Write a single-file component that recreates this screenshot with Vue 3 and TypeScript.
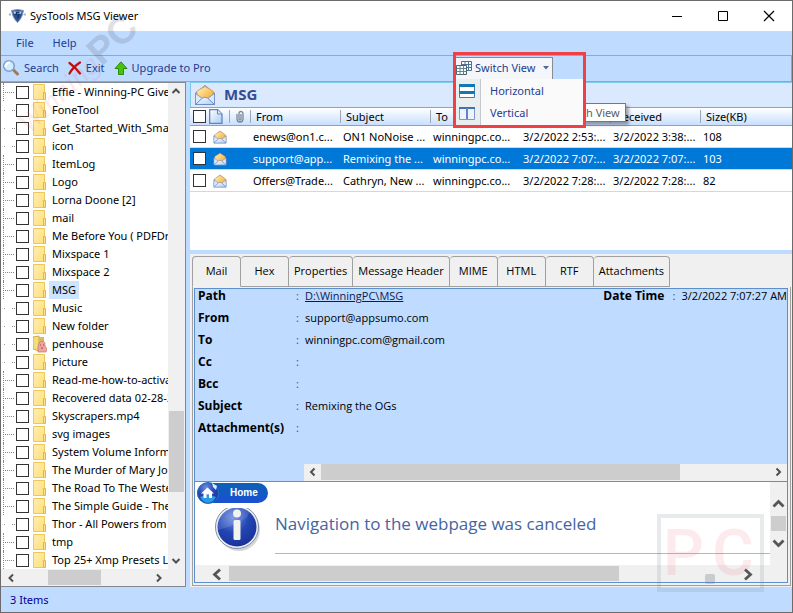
<script setup lang="ts">
import { ref } from 'vue'

interface Folder { name: string; partial?: boolean; special?: boolean }
interface Mail { from: string; subject: string; to: string; sent: string; received: string; size: number }

const folders: Folder[] = [
  { name: 'Effie - Winning-PC Giveaway' },
  { name: 'FoneTool', partial: true },
  { name: 'Get_Started_With_Smallpdf', partial: true },
  { name: 'icon', partial: true },
  { name: 'ItemLog' },
  { name: 'Logo' },
  { name: 'Lorna Doone [2]' },
  { name: 'mail' },
  { name: 'Me Before You ( PDFDrive )' },
  { name: 'Mixspace 1' },
  { name: 'Mixspace 2' },
  { name: 'MSG' },
  { name: 'Music', partial: true },
  { name: 'New folder', partial: true },
  { name: 'penhouse', partial: true, special: true },
  { name: 'Picture', partial: true },
  { name: 'Read-me-how-to-activate' },
  { name: 'Recovered data 02-28-2022' },
  { name: 'Skyscrapers.mp4' },
  { name: 'svg images' },
  { name: 'System Volume Information' },
  { name: 'The Murder of Mary Jones' },
  { name: 'The Road To The Western' },
  { name: 'The Simple Guide - The' },
  { name: 'Thor - All Powers from', partial: true },
  { name: 'tmp' },
  { name: 'Top 25+ Xmp Presets Lightroom' },
]

const mails: Mail[] = [
  { from: 'enews@on1.c...', subject: 'ON1 NoNoise ...', to: 'winningpc.co...', sent: '3/2/2022 2:53:...', received: '3/2/2022 3:38:...', size: 108 },
  { from: 'support@app...', subject: 'Remixing the ...', to: 'winningpc.co...', sent: '3/2/2022 7:07:...', received: '3/2/2022 7:07:...', size: 103 },
  { from: 'Offers@Trade...', subject: 'Cathryn, New ...', to: 'winningpc.co...', sent: '3/2/2022 7:28:...', received: '3/2/2022 7:28:...', size: 82 },
]

const tabs = ['Mail', 'Hex', 'Properties', 'Message Header', 'MIME', 'HTML', 'RTF', 'Attachments']
const details = [
  { label: 'From', value: 'support@appsumo.com' },
  { label: 'To', value: 'winningpc.com@gmail.com' },
  { label: 'Cc', value: '' },
  { label: 'Bcc', value: '' },
  { label: 'Subject', value: 'Remixing the OGs' },
  { label: 'Attachment(s)', value: '' },
]
const activeFolder = ref('MSG')
const activeMail = ref(1)
const activeTab = ref('Mail')
</script>

<template>
  <div class="window">
    <svg class="defs" width="0" height="0" aria-hidden="true">
      <defs>
        <linearGradient id="flap" x1="0" y1="0" x2="1" y2="1"><stop offset="0" stop-color="#fff3c4" /><stop offset="1" stop-color="#f4a41c" /></linearGradient>
        <linearGradient id="paper" x1="0" y1="0" x2="1" y2="1"><stop offset="0" stop-color="#ffffff" /><stop offset="1" stop-color="#a9cdf2" /></linearGradient>
        <linearGradient id="fold" x1="0" y1="0" x2="1" y2="1"><stop offset="0" stop-color="#ffeeb0" /><stop offset="1" stop-color="#ffdf7c" /></linearGradient>
        <radialGradient id="orb" cx=".4" cy=".25" r=".8"><stop offset="0" stop-color="#6f8fe0" /><stop offset=".5" stop-color="#2346b4" /><stop offset="1" stop-color="#1a2f96" /></radialGradient>
        <symbol id="envelope" viewBox="0 0 22 22">
          <path d="M1.5 9 11 1.5 20.5 9V20.5H1.5z" fill="#9aaad2" stroke="#7d8fbe" />
          <path d="M3 7 11 2.500l8 4.500v6l-8 4-8-4z" fill="url(#flap)" stroke="#d99a35" stroke-width=".7" />
          <path d="M1.500 9.500 8.500 14.500 1.500 20.500zM20.500 9.500 13.500 14.500 20.500 20.500z" fill="#d8eafc" stroke="#6683bd" stroke-width=".7" />
          <path d="M1.500 20.500 8.500 14Q11 12.500 13.500 14L20.500 20.500z" fill="url(#paper)" stroke="#6683bd" stroke-width=".8" />
        </symbol>
        <symbol id="chev-left" viewBox="0 0 16 16"><path d="M10 4.500 6.500 8 10 11.500" fill="none" stroke="#505050" stroke-width="2" /></symbol>
        <symbol id="chev-right" viewBox="0 0 16 16"><path d="M6 4.500 9.500 8 6 11.500" fill="none" stroke="#505050" stroke-width="2" /></symbol>
        <symbol id="chev-up" viewBox="0 0 16 16"><path d="M4.500 10 8 6.500 11.500 10" fill="none" stroke="#505050" stroke-width="2" /></symbol>
        <symbol id="chev-down" viewBox="0 0 16 16"><path d="M4.500 6 8 9.500 11.500 6" fill="none" stroke="#505050" stroke-width="2" /></symbol>
      </defs>
    </svg>

    <header class="titlebar">
      <svg class="app-icon" width="17" height="14" viewBox="0 0 17 14">
        <path d="M2.500 1.500 8.500.500 14.500 1.500 13 7Q12 10 8.500 13.500 5 10 4 7z" fill="#2c5093" stroke="#8297b8" />
        <path d="M4 2.500h9L11.500 5H5.500z" fill="#c3d1e6" />
        <path d="M10.500 3.500H7.500L7 5.500h3L9.500 8 8 9" fill="none" stroke="#16356e" stroke-width="1.300" />
        <path d="M1 4v3M0 5.500h2M16 4v3M14.500 5.500h2" stroke="#8fa3bf" stroke-width=".8" />
      </svg>
      <span>SysTools MSG Viewer</span>
      <div class="caption-buttons">
        <button aria-label="Minimize"><svg width="12" height="12"><path d="M1 6.500h10" stroke="#000" /></svg></button>
        <button aria-label="Maximize"><svg width="12" height="12"><path d="M1.500 1.500h9v9h-9z" fill="none" stroke="#000" /></svg></button>
        <button aria-label="Close"><svg width="12" height="12"><path d="M1 1l10 10M11 1 1 11" stroke="#000" stroke-width="1.200" /></svg></button>
      </div>
    </header>

    <nav class="menubar">
      <button>File</button>
      <button>Help</button>
    </nav>

    <div class="toolbar">
      <button class="tool">
        <svg width="18" height="18" viewBox="0 0 18 18">
          <path d="M11.500 11 15.500 15" stroke="#a8784a" stroke-width="3" stroke-linecap="round" />
          <circle cx="7" cy="7" r="5.300" fill="#d3eaff" stroke="#7f9fcb" stroke-width="1.600" />
          <path d="M3.500 8Q3.500 3.500 8 3.500" fill="none" stroke="#fff" stroke-width="2" />
        </svg>
        <span>Search</span>
      </button>
      <button class="tool">
        <svg width="14" height="14" viewBox="0 0 14 14"><path d="M1.500 2Q7 6 12 12.500M12 1.500Q5 6 1.500 12.500" fill="none" stroke="#c40d0d" stroke-width="2.200" stroke-linecap="round" /></svg>
        <span>Exit</span>
      </button>
      <button class="tool">
        <svg width="14" height="14" viewBox="0 0 14 14"><path d="M7 .800 13 7.500H9.500v6h-5v-6H1z" fill="#46c40c" stroke="#2d8c06" /></svg>
        <span>Upgrade to Pro</span>
      </button>
      <div class="switcher">
        <button class="switch-button">
          <svg width="16" height="14" viewBox="0 0 16 14">
            <path d="M5.500.500h10v9h-10z" fill="#fff" stroke="#4a7594" /><path d="M5.500 3.500h10M5.500 6.500h10M9 .500v9M12.500.500v9" stroke="#4a7594" />
            <path d="M.500 4.500h10v9H.500z" fill="#fff" stroke="#48636b" /><path d="M.500 7.500h10M.500 10.500h10M4 4.500v9M7.500 4.500v9" stroke="#5d888e" />
          </svg>
          <span>Switch View</span>
          <svg width="6" height="4" viewBox="0 0 6 4"><path d="M0 0h6L3 3.500z" fill="#4b65a8" /></svg>
        </button>
        <div class="dropdown">
          <button>
            <svg width="16" height="16" viewBox="0 0 16 16"><path d="M.500 1.500h15v13H.500z" fill="#fff" stroke="#3f7fae" /><path d="M0 1h16v3H0zM0 8h16v3H0z" fill="#1677b8" /></svg>
            <span>Horizontal</span>
          </button>
          <button>
            <svg width="16" height="16" viewBox="0 0 16 16"><path d="M.500 2.500h15v12H.500z" fill="#eef4fd" stroke="#7d97cb" /><path d="M0 2h16v2H0z" fill="#4070b8" /><path d="M8 3v11" stroke="#6484c0" stroke-width="2" /></svg>
            <span>Vertical</span>
          </button>
        </div>
        <div class="tip">h View</div>
        <div class="highlight"></div>
      </div>
    </div>

    <main class="body">
      <aside class="tree">
        <div class="tree-main">
          <ul>
            <li v-for="folder in folders" :key="folder.name" :class="{ selected: folder.name === activeFolder, partial: folder.partial }">
              <span class="branch"></span>
              <input type="checkbox" :aria-label="folder.name">
              <svg v-if="!folder.special" class="folder" width="14" height="18" viewBox="0 0 14 18">
                <path d="M.500 1.500h11v15H.500z" fill="url(#fold)" stroke="#edc75a" /><path d="M10.500 9.500h2v7h-2z" fill="#ffe48c" stroke="#e4b63f" />
              </svg>
              <svg v-else class="folder" width="14" height="18" viewBox="0 0 14 18">
                <path d="M0 2 6 1v15L0 14z" fill="#f4dc79" stroke="#c9ad4c" /><path d="M6 2h5v13H6z" fill="#d7bd5e" /><path d="M6 8Q9 4 12 8v3l2 3-1 3H5V12z" fill="#f0a49e" stroke="#bd7771" stroke-width=".700" /><path d="M7 10h1M10 10h1M8 13h2" stroke="#884f4e" />
              </svg>
              <button @click="activeFolder = folder.name">{{ folder.name }}</button>
            </li>
          </ul>
          <div class="vbar">
            <svg width="16" height="16"><use href="#chev-up" /></svg>
            <div class="track-v"><div class="thumb-v"></div></div>
            <svg width="16" height="16"><use href="#chev-down" /></svg>
          </div>
        </div>
        <div class="hbar tree-bar">
          <svg width="16" height="16"><use href="#chev-left" /></svg>
          <div class="track"><div class="thumb"></div></div>
          <svg width="16" height="16"><use href="#chev-right" /></svg>
        </div>
      </aside>

      <section class="content">
        <h1 class="folder-title"><svg width="22" height="22"><use href="#envelope" /></svg><span>MSG</span></h1>
        <div class="list">
          <table>
            <colgroup><col class="c-check"><col class="c-icon"><col class="c-icon"><col class="c-text"><col class="c-text"><col class="c-text"><col class="c-text"><col class="c-text"><col></colgroup>
            <thead>
              <tr>
                <th><input type="checkbox" aria-label="Select all"></th>
                <th><svg width="14" height="15" viewBox="0 0 14 15"><path d="M.700.700h8L13 5v9.300H.700z" fill="url(#paper)" stroke="#6a82bc" stroke-width="1.300" /><path d="M8.500.700V5H13" fill="#dce9fb" stroke="#6a82bc" /></svg></th>
                <th class="sep clip"><svg width="12" height="14" viewBox="0 0 12 14"><path d="M3 4v5a3 3 0 0 0 6 0V3.500a2 2 0 0 0-4 0V9a1 1 0 0 0 2 0V4" fill="none" stroke="#7d8794" stroke-width="1.300" /></svg></th>
                <th class="sep">From</th>
                <th class="sep">Subject</th>
                <th class="sep">To</th>
                <th class="sep" aria-label="Sent"></th>
                <th class="sep">Received</th>
                <th class="sep">Size(KB)</th>
              </tr>
            </thead>
            <tbody>
              <tr v-for="(mail, i) in mails" :key="mail.from" :class="{ active: i === activeMail }" @click="activeMail = i">
                <td><input type="checkbox" :aria-label="mail.from"></td>
                <td><svg width="14" height="14"><use href="#envelope" /></svg></td>
                <td></td>
                <td>{{ mail.from }}</td>
                <td>{{ mail.subject }}</td>
                <td>{{ mail.to }}</td>
                <td>{{ mail.sent }}</td>
                <td>{{ mail.received }}</td>
                <td>{{ mail.size }}</td>
              </tr>
            </tbody>
          </table>
        </div>

        <div class="preview">
          <div class="tabs" role="tablist">
            <button v-for="tab in tabs" :key="tab" role="tab" :aria-selected="tab === activeTab" :class="{ on: tab === activeTab }" @click="activeTab = tab">{{ tab }}</button>
          </div>
          <div class="pane">
            <div class="sheet">
              <dl class="details">
                <div class="line">
                  <dt>Path</dt><i>:</i><dd><a href="#path">D:\WinningPC\MSG</a></dd>
                  <div class="date"><b>Date Time</b><i>:</i><span>3/2/2022 7:07:27 AM</span></div>
                </div>
                <div v-for="row in details" :key="row.label" class="line"><dt>{{ row.label }}</dt><i>:</i><dd>{{ row.value }}</dd></div>
              </dl>
              <div class="hbar head-bar">
                <svg width="17" height="16"><use href="#chev-left" /></svg>
                <div class="track"><div class="thumb"></div></div>
                <svg width="17" height="16"><use href="#chev-right" /></svg>
              </div>
              <div class="browser">
                <div class="page">
                  <button class="home">
                    <svg width="22" height="22" viewBox="0 0 22 22"><circle cx="11" cy="11" r="10.500" fill="url(#orb)" stroke="#2b70b4" /><path d="M3 15Q11 11 19 15 17 20 11 21 5 20 3 15z" fill="#289be8" /><path d="M4 11.500 10.500 5.500 17 11.500H15V16H12V12.500H9.500V16H6.500V11.500z" fill="#fff" /><path d="M15 1 20 4 19 8 16 5z" fill="#d8eafb" /></svg>
                    <span>Home</span>
                  </button>
                  <div class="notice">
                    <svg class="info" width="47" height="44" viewBox="0 0 47 44">
                      <ellipse cx="25" cy="22" rx="21" ry="21" fill="#999" opacity=".4" />
                      <circle cx="23" cy="19" r="21.500" fill="#eceff5" stroke="#818ba5" />
                      <circle cx="23" cy="19" r="19.500" fill="url(#orb)" />
                      <path d="M4 17Q5 2 19 0H34Q37 4 33 9 24 17 4 22z" fill="#fff" opacity=".13" />
                      <circle cx="23" cy="5.500" r="4" fill="#f2f2ef" /><rect x="19.500" y="12" width="7" height="20" rx="1.500" fill="#f2f2ef" />
                    </svg>
                    <h2>Navigation to the webpage was canceled</h2>
                  </div>
                </div>
                <div class="vbar page-vbar">
                  <svg width="17" height="17" viewBox="0 0 17 17"><path d="M3.500 11.500 8.500 6.500 13.500 11.500" fill="none" stroke="#555" stroke-width="2.800" /></svg>
                  <div class="thumb-v"></div>
                  <svg width="17" height="17" viewBox="0 0 17 17"><path d="M3.500 5.500 8.500 10.500 13.500 5.500" fill="none" stroke="#555" stroke-width="2.800" /></svg>
                </div>
              </div>
              <div class="hbar page-bar">
                <svg width="34" height="17" viewBox="0 0 34 17"><path d="M25 3.500 19.500 8.500 25 13.500" fill="none" stroke="#555" stroke-width="2.800" /></svg>
                <div class="track"><div class="thumb"></div></div>
                <svg width="51" height="17" viewBox="0 0 51 17"><path d="M9 3.500 14.500 8.500 9 13.500" fill="none" stroke="#555" stroke-width="2.800" /></svg>
              </div>
            </div>
          </div>
        </div>
      </section>
    </main>

    <footer class="status">3 Items</footer>

    <div class="mark"><span>Winning</span><b>PC</b></div>
    <svg class="stamp" width="107" height="78" viewBox="0 0 107 78">
      <rect x="2" y="2" width="103" height="74" fill="none" stroke="#70808a" stroke-width="4" opacity=".16" />
      <g class="stamp-text"><text x="6" y="61">P</text><text x="55" y="61">C</text></g>
      <rect x="48" y="60" width="10" height="10" rx="2" fill="#6f7b85" opacity=".3" />
    </svg>
  </div>
</template>

<style>
body { margin: 0; }
</style>

<style scoped>
* { box-sizing: border-box; }
.window { position: relative; display: flex; flex-direction: column; height: 100vh; overflow: hidden; border: 1px solid #6b6b6b; background: #bfdbff; color: #000; font: 11px/18px "Noto Sans", "Open Sans", sans-serif; }
.defs { position: absolute; }
button { display: flex; align-items: center; margin: 0; padding: 0; border: 0; background: none; color: inherit; font: inherit; white-space: nowrap; }
svg { display: block; flex: none; }
input[type="checkbox"] { display: block; flex: none; appearance: none; width: 13px; height: 13px; margin: 0; border: 1px solid #333; background: #fff; }
.titlebar { display: flex; flex: none; align-items: center; height: 30px; padding-left: 8px; gap: 4px; background: #fff; }
.caption-buttons { display: flex; margin-left: auto; }
.caption-buttons button { justify-content: center; width: 46px; height: 30px; }
.menubar { display: flex; flex: none; height: 24px; padding-left: 15px; gap: 19px; color: #1e3c91; }
.toolbar { display: flex; flex: none; align-items: center; height: 27px; padding: 0 0 2px 1px; border: 1px solid #9aa5b5; border-left: 0; color: #1e3c91; }
.tool { gap: 4px; margin-right: 9px; }
.switcher { position: relative; margin: 0 238px 0 auto; }
.switch-button { width: 97px; height: 22px; gap: 3px; border: 1px solid #868b94; border-width: 1px 1px 0 0; background: #f4f6fa; }
.switch-button svg:last-child { margin-left: 4px; }
.dropdown { position: absolute; z-index: 2; top: 22px; left: 0; width: 127px; height: 46px; padding-top: 1px; background: linear-gradient(90deg, #e9eeee 24px, #c5c9ce 24px, #c5c9ce 25px, #fafafa 25px); }
.dropdown button { width: 100%; height: 22px; padding-left: 3px; gap: 15px; }
.highlight { position: absolute; z-index: 3; top: -5px; left: -3px; width: 133px; height: 76px; border: 3px solid #f04046; }
.tip { position: absolute; z-index: 1; top: 46px; left: 125px; width: 45px; height: 19px; padding-left: 4px; border: 1px solid #777; background: #fff; color: #5d5d5d; box-shadow: 3px 3px 3px #0005; line-height: 17px; }
.body { display: flex; flex: 1; min-height: 0; gap: 4px; }
.tree { display: flex; flex: none; flex-direction: column; width: 185px; border: 1px solid #828790; border-left: 0; background: #fff; }
.tree-main { display: flex; flex: 1; min-height: 0; }
.tree ul { flex: 1; min-width: 0; margin: 0; padding: 0 0 0 2px; list-style: none; overflow: hidden; }
.tree li { display: flex; align-items: center; height: 18px; }
.branch { flex: none; align-self: stretch; width: 13px; border-left: 1px dotted #888; background: repeating-linear-gradient(90deg, #888 0 1px, transparent 1px 2px) 1px 9px / 10px 1px no-repeat; }
.partial .branch { border-left-color: transparent; background: linear-gradient(90deg, #999 1px, transparent 1px 8px, #888 8px 9px, transparent 9px 10px, #888 10px) 0 9px / 11px 1px no-repeat; }
.folder { margin: 0 2px 0 4px; }
.tree li button { height: 18px; padding: 0 3px; }
.selected button { background: #cce4ff; }
.vbar { display: flex; flex: none; flex-direction: column; width: 17px; background: #f0f0f0; }
.track-v { display: flex; flex: 1; flex-direction: column; justify-content: flex-end; padding-bottom: 61px; }
.thumb-v { height: 81px; margin: 0 1px; background: #cdcdcd; }
.hbar { display: flex; flex: none; align-items: stretch; background: #f0f0f0; }
.track { flex: 1; }
.thumb { height: 100%; background: #cdcdcd; }
.tree-bar { height: 17px; padding: 1px 18px 1px 2px; }
.tree-bar .thumb { width: 53px; margin-left: 29px; }
.content { display: flex; flex: 1; flex-direction: column; min-width: 0; }
.folder-title { display: flex; flex: none; align-items: center; height: 25px; margin: 0; padding-left: 3px; gap: 8px; border: 1px solid #80c9ee; border-width: 1px 0 0 1px; background: #dbe9ff; color: #354d91; font: bold 15px/20px "Open Sans", sans-serif; }
.folder-title span { height: 22px; }
.list { flex: none; height: 143px; overflow: hidden; background: #fff; }
table { width: 100%; table-layout: fixed; border-collapse: separate; border-spacing: 0; }
.c-check { width: 18px; }
.c-icon { width: 21px; }
.c-text { width: 90px; }
th { height: 19px; padding: 0 0 0 6px; border: 1px solid #9a9fa8; border-width: 1px 0; background: linear-gradient(#fff, #c8dfff); font-weight: 400; line-height: 17px; text-align: left; overflow: hidden; white-space: nowrap; }
.sep { background: linear-gradient(#a0a7b2, #a0a7b2) 0 2px / 1px 13px no-repeat, linear-gradient(#fff, #c8dfff); }
th:nth-child(-n+2) { padding-left: 3px; }
th:nth-child(2) { padding-left: 1px; }
.clip { padding-left: 5px; }
td { height: 22px; padding: 0 0 0 3px; border-bottom: 1px solid #bfdbff; line-height: 20px; white-space: nowrap; overflow: hidden; }
td:nth-child(2) { padding-left: 5px; }
.active td { background: #0078d7; color: #fff; }
.preview { display: flex; flex: 1; flex-direction: column; min-height: 0; margin-top: 4px; padding: 2px 0 1px 2px; background: #f0f0f0; font-family: "Open Sans", "Noto Sans", sans-serif; }
.tabs { display: flex; flex: none; height: 31px; }
.tabs button { justify-content: center; min-width: 48px; padding: 0 5px 2px; border: 1px solid #a0a0a0; border-left: 0; border-radius: 4px 4px 0 0; }
.tabs button.on { min-width: 49px; border-left: 1px solid #a0a0a0; border-bottom-color: #f0f0f0; }
.pane { display: flex; flex: 1; min-height: 0; margin-right: 1px; padding: 1px 2px 2px 1px; border: 1px solid #a0a0a0; border-top: 0; }
.sheet { display: flex; flex: 1; flex-direction: column; min-width: 0; border: 1px solid #5b8fce; background: #bfdbff; }
.details { flex: 1; margin: 0; padding-left: 3px; line-height: 14px; overflow: hidden; }
.line { display: flex; height: 22px; }
dt { width: 98px; font-size: 12px; font-weight: 700; }
dd { margin: 0; }
i { width: 9px; color: #33506f; font-style: normal; }
a { color: #101a50; }
.date { display: flex; margin-left: auto; }
.date b { margin-right: 8px; font-size: 12px; }
.head-bar { height: 17px; margin-left: 109px; padding-bottom: 1px; }
.head-bar .thumb { width: 80%; }
.browser { display: flex; flex: none; height: 84px; border-top: 1px solid #5b8fce; background: #fff; }
.page { flex: 1; padding: 1px 0 0 2px; }
.home { height: 20px; padding-right: 10px; gap: 11px; border-radius: 10px; background: linear-gradient(#0b62b5, #1b4fd3); color: #fff; font: bold 10px/16px "Liberation Sans", sans-serif; }
.notice { display: flex; margin: 5px 0 0 17px; gap: 14px; }
h2 { flex: 1; height: 46px; margin: 0; padding-top: 2px; border-bottom: 1px solid #b6b4c8; color: #4465a2; font: 400 17px/28px "Open Sans", sans-serif; }
.page-vbar { justify-content: flex-end; padding-bottom: 13px; }
.page-vbar .thumb-v { height: 15px; margin: 4px 1px; }
.page-bar { height: 17px; padding: 1px 0; }
.page-bar .thumb { width: 77%; }
.status { flex: none; height: 25px; padding: 4px 9px; color: #00009c; }
.mark { position: absolute; top: 57px; left: -1px; transform: rotate(-43deg); color: #e0506a; font: italic 30px/30px "Liberation Serif", serif; white-space: nowrap; pointer-events: none; }
.mark span { opacity: .11; }
.mark b { color: #445; opacity: .16; font: bold 38px/30px "Liberation Sans", sans-serif; }
.stamp { position: absolute; right: 28px; bottom: 20px; pointer-events: none; }
.stamp-text { fill: #f24a62; opacity: .11; font: 500 64px "Liberation Sans Narrow", Roboto, sans-serif; }
</style>
